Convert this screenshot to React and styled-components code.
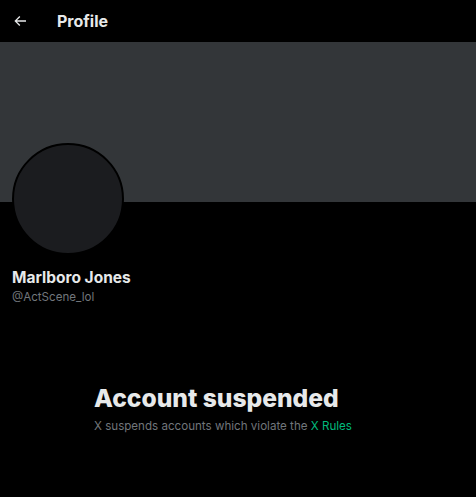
import styled, { createGlobalStyle } from "styled-components";

const GlobalStyle = createGlobalStyle`
  html, body {
    margin: 0;
    padding: 0;
    background: #000;
  }
  body {
    font-family: Inter, "Liberation Sans", sans-serif;
    color: #e7e9ea;
  }
`;

const Page = styled.div`
  width: 476px;
  height: 497px;
  background: #000;
  overflow: hidden;
`;

const TopBar = styled.div`
  height: 42px;
  display: flex;
  align-items: center;
  padding-left: 12px;
  gap: 29px;
`;

const BackButton = styled.div`
  width: 16px;
  height: 16px;
  display: flex;
  align-items: center;
  justify-content: center;
  color: #e7e9ea;
`;

const Title = styled.h1`
  margin: 0;
  font-size: 16px;
  font-weight: 700;
  line-height: 20px;
  color: #e7e9ea;
`;

const Banner = styled.div`
  height: 160px;
  background: #333639;
`;

const ProfileInfo = styled.div`
  padding: 0 12px;
`;

const Avatar = styled.div`
  width: 108px;
  height: 108px;
  margin-top: -59px;
  border-radius: 50%;
  background: #1b1c1f;
  border: 2px solid #000;
`;

const Name = styled.div`
  margin-top: 13px;
  font-size: 15.5px;
  font-weight: 700;
  line-height: 20px;
  color: #e7e9ea;
`;

const Handle = styled.div`
  margin-top: 1px;
  font-size: 11.6px;
  line-height: 16px;
  color: #71767b;
`;

const Notice = styled.div`
  width: 288px;
  margin: 78px auto 0;
`;

const NoticeTitle = styled.div`
  font-size: 24.6px;
  font-weight: 800;
  line-height: 30px;
  color: #e7e9ea;
`;

const NoticeText = styled.div`
  margin-top: 5px;
  font-size: 11.6px;
  line-height: 16px;
  color: #71767b;
`;

const RulesLink = styled.span`
  color: #00ba7c;
`;

export default function App() {
  return (
    <Page>
      <GlobalStyle />
      <TopBar>
        <BackButton>
          <svg viewBox="0 0 24 24" width="16" height="16" fill="currentColor">
            <path d="M7.414 13l5.043 5.04-1.414 1.42L3.586 12l7.457-7.46 1.414 1.42L7.414 11H21v2H7.414z" />
          </svg>
        </BackButton>
        <Title>Profile</Title>
      </TopBar>
      <Banner />
      <ProfileInfo>
        <Avatar />
        <Name>Marlboro Jones</Name>
        <Handle>@ActScene_lol</Handle>
      </ProfileInfo>
      <Notice>
        <NoticeTitle>Account suspended</NoticeTitle>
        <NoticeText>
          X suspends accounts which violate the <RulesLink>X Rules</RulesLink>
        </NoticeText>
      </Notice>
    </Page>
  );
}
